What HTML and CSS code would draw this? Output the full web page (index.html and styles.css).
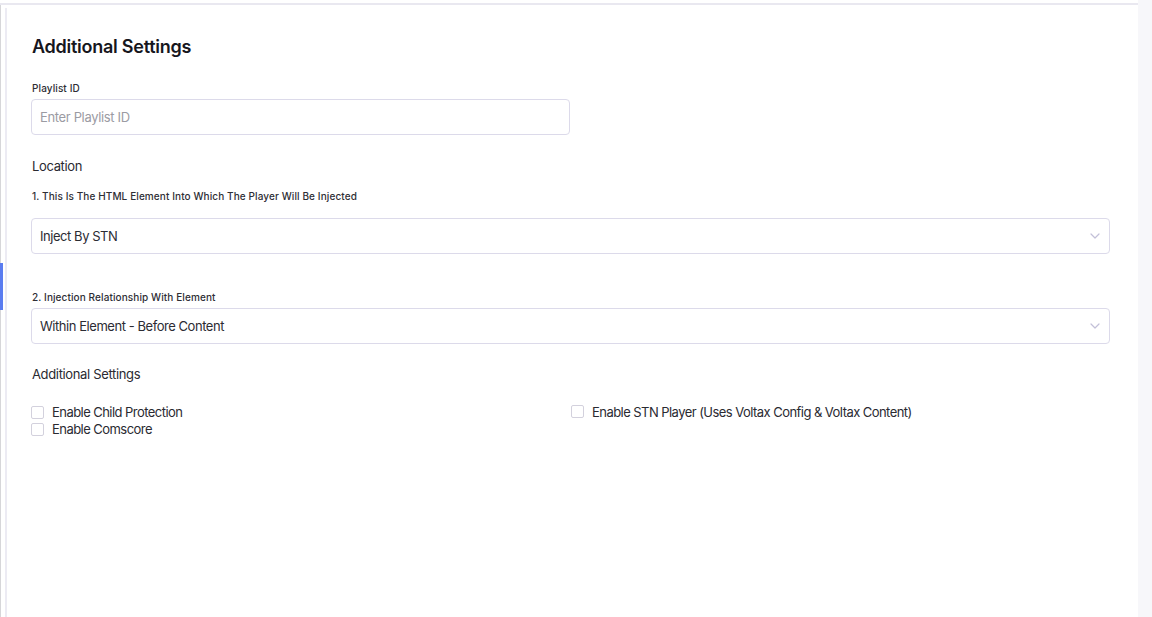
FILE: index.html
```html
<!DOCTYPE html>
<html lang="en">
<head>
<meta charset="utf-8">
<title>Additional Settings</title>
<link rel="stylesheet" href="styles.css">
</head>
<body>
<div class="page">
  <div class="panel">
    <div class="topbar"></div>
    <div class="panel-body">
      <div class="rail"><span class="rail-marker"></span></div>
      <main class="content">
        <h2 class="title">Additional Settings</h2>

        <div class="half">
          <label class="field-label" for="playlist">Playlist ID</label>
          <input id="playlist" class="input" type="text" placeholder="Enter Playlist ID">
        </div>

        <h3 class="section">Location</h3>

        <label class="field-label gap-sm">1. This Is The HTML Element Into Which The Player Will Be Injected</label>
        <div class="select">
          <span class="select-value">Inject By STN</span>
          <svg class="chevron" width="10" height="6" viewBox="0 0 10 6"><path d="M1 1l4 4 4-4" fill="none" stroke="currentColor" stroke-width="1.2" stroke-linecap="round" stroke-linejoin="round"/></svg>
        </div>

        <label class="field-label gap-lg">2. Injection Relationship With Element</label>
        <div class="select">
          <span class="select-value">Within Element - Before Content</span>
          <svg class="chevron" width="10" height="6" viewBox="0 0 10 6"><path d="M1 1l4 4 4-4" fill="none" stroke="currentColor" stroke-width="1.2" stroke-linecap="round" stroke-linejoin="round"/></svg>
        </div>

        <h3 class="section section-2">Additional Settings</h3>

        <div class="checks">
          <div class="check-col">
            <label class="check"><span class="box"></span>Enable Child Protection</label>
            <label class="check"><span class="box"></span>Enable Comscore</label>
          </div>
          <div class="check-col">
            <label class="check check-up"><span class="box"></span>Enable STN Player (Uses Voltax Config &amp; Voltax Content)</label>
          </div>
        </div>
      </main>
    </div>
  </div>
  <div class="side"></div>
</div>
</body>
</html>
```

FILE: styles.css
```css
* { box-sizing: border-box; }

html, body {
  margin: 0;
  height: 100%;
}

body {
  font-family: Inter, "Liberation Sans", sans-serif;
  color: #2b2b33;
  background: #f7f7fa;
}

.page {
  display: flex;
  height: 617px;
}

.panel {
  width: 1138px;
  background: #fff;
  display: flex;
  flex-direction: column;
}

.topbar {
  height: 5px;
  border-top: 3px solid #fff;
  border-bottom: 2px solid #e9e8f0;
}

.panel-body {
  flex: 1;
  display: flex;
}

.rail {
  width: 5px;
  border-left: 1px solid #d6d6d9;
  position: relative;
}

.rail-marker {
  position: absolute;
  left: -1px;
  top: 258px;
  width: 3px;
  height: 47px;
  background: #5a7cf0;
}

.content {
  flex: 1;
  margin-top: 3px;
  border-left: 2px solid #ecebf3;
  padding: 28px 28px 0 24px;
}

.side {
  flex: 1;
  background: #f7f7fa;
}

.title {
  margin: 0;
  padding-left: 1px;
  font-size: 18px;
  line-height: 22px;
  font-weight: 600;
  letter-spacing: -0.25px;
  color: #16161d;
}

.half {
  width: 540px;
  display: flex;
  flex-direction: column;
}

.field-label {
  display: block;
  margin-top: 23px;
  margin-bottom: 4px;
  padding-left: 1px;
  font-size: 10px;
  line-height: 14px;
  font-weight: 500;
  letter-spacing: 0.1px;
  color: #2e2e35;
}

.gap-sm { margin-top: 14px; margin-bottom: 15px; }
.gap-lg { margin-top: 36px; }

.input {
  width: 539px;
  height: 36px;
  border: 1.5px solid #dcdaea;
  border-radius: 4px;
  padding: 0 8px;
  font-family: inherit;
  font-size: 13px;
  letter-spacing: -0.35px;
  outline: none;
}

.input::placeholder { color: #9b9ba3; }

.section {
  margin: 22px 0 0;
  padding-left: 1px;
  font-size: 13px;
  line-height: 18px;
  font-weight: 400;
  letter-spacing: -0.35px;
  color: #2a2a31;
}

.section-2 { margin-top: 21px; }

.select {
  height: 36px;
  border: 1.5px solid #dcdaea;
  border-radius: 4px;
  padding: 0 9px 0 8px;
  display: flex;
  align-items: center;
  justify-content: space-between;
}

.select-value {
  font-size: 13px;
  letter-spacing: -0.45px;
  color: #2c2c33;
}

.chevron { color: #c3c0d8; }

.checks {
  margin-top: 21px;
  display: grid;
  grid-template-columns: 540px 1fr;
}

.check-col {
  display: flex;
  flex-direction: column;
}

.check {
  display: flex;
  align-items: center;
  gap: 8px;
  font-size: 13px;
  line-height: 17px;
  letter-spacing: -0.55px;
  color: #2a2a31;
}

.check-up .box { transform: translateY(-1px); }

.box {
  width: 13px;
  height: 13px;
  border: 1px solid #d3d1dd;
  border-radius: 2px;
  background: #fff;
}
```
